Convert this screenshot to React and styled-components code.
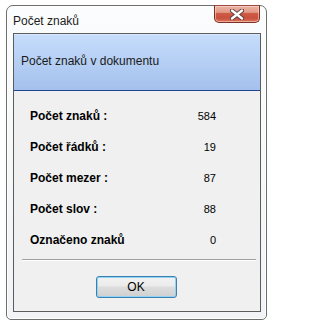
import React from "react";
import styled, { createGlobalStyle } from "styled-components";

const stats = [
  { label: "Počet znaků :", value: 584 },
  { label: "Počet řádků :", value: 19 },
  { label: "Počet mezer :", value: 87 },
  { label: "Počet slov :", value: 88 },
  { label: "Označeno znaků", value: 0 },
];

const CloseIcon = () => (
  <svg width="14" height="11" viewBox="0 0 14 11">
    <path
      d="M2 1.5 L12 9.5 M12 1.5 L2 9.5"
      stroke="#5a3a36"
      strokeWidth="4.2"
      strokeLinecap="round"
      fill="none"
    />
    <path
      d="M2 1.5 L12 9.5 M12 1.5 L2 9.5"
      stroke="#ffffff"
      strokeWidth="2.4"
      strokeLinecap="round"
      fill="none"
    />
  </svg>
);

const App = () => (
  <>
    <GlobalStyle />
    <Window>
      <TitleBar>
        <Title>Počet znaků</Title>
        <CloseButton aria-label="Zavřít">
          <CloseIcon />
        </CloseButton>
      </TitleBar>
      <Panel>
        <Header>Počet znaků v dokumentu</Header>
        <StatsGrid>
          {stats.map((s) => (
            <React.Fragment key={s.label}>
              <Label>{s.label}</Label>
              <Value>{s.value}</Value>
            </React.Fragment>
          ))}
        </StatsGrid>
        <Separator />
        <Footer>
          <OkButton>OK</OkButton>
        </Footer>
      </Panel>
    </Window>
  </>
);

export default App;

// --- Styled Components ---
const GlobalStyle = createGlobalStyle`
  html, body { margin: 0; padding: 0; background: #ffffff; }
  body { font-family: "Liberation Sans", Arial, sans-serif; }
  * { box-sizing: border-box; }
`;
const Window = styled.div`
  margin: 5px 0 0 6px; width: 261px; height: 315px;
  border: 1px solid #6e6e6e; border-radius: 7px 7px 5px 5px;
  background: linear-gradient(#fbfcfd, #f1f3f6);
  display: flex; flex-direction: column;
  box-shadow: inset 0 0 0 1px #ffffff;
`;
const TitleBar = styled.div`
  height: 27px; display: flex; align-items: flex-start; justify-content: space-between;
  padding: 0 6px 0 6px;
`;
const Title = styled.div`
  font-size: 12px; color: #1b1b1b; margin-top: 8px;
`;
const CloseButton = styled.div`
  width: 46px; height: 18px; margin-top: -1px;
  border: 1px solid #7d2f24; border-top-color: #9a4a3e; border-radius: 0 0 5px 5px;
  background: linear-gradient(#eab3a5 0%, #e39a88 40%, #cf5c48 45%, #c9503c 75%, #d9745e 100%);
  box-shadow: inset 0 0 0 1px rgba(255, 220, 210, 0.55);
  display: flex; align-items: center; justify-content: center;
`;
const Panel = styled.div`
  margin: 0 5px 7px 6px; height: 279px;
  border: 1px solid #5c5c5c; background: #f0f0f0;
  display: flex; flex-direction: column;
`;
const Header = styled.div`
  height: 57px; padding: 0 0 2px 7px;
  display: flex; align-items: center;
  font-size: 12px; color: #1a1a1a;
  background: linear-gradient(#c6ddfb, #a4c1ed);
  border-bottom: 1px solid #1f4690;
  box-shadow: inset 0 1px 0 #d9e8fc;
`;
const StatsGrid = styled.div`
  margin-top: 9px; padding: 0 44px 0 16px;
  display: grid; grid-template-columns: 1fr auto; grid-auto-rows: 31px;
  align-items: center;
`;
const Label = styled.div`
  font-size: 12px; font-weight: bold; color: #000;
`;
const Value = styled.div`
  font-size: 11px; color: #000; text-align: right;
`;
const Separator = styled.div`
  margin: 4px 4px 0 8px; height: 2px;
  border-top: 1px solid #a0a0a0; border-bottom: 1px solid #ffffff;
`;
const Footer = styled.div`
  display: flex; justify-content: center; padding: 15px 2px 0 0;
`;
const OkButton = styled.button`
  width: 81px; height: 22px; padding: 0;
  border: 1px solid #3c7fb1; border-radius: 3px;
  background: linear-gradient(#f2f2f2 0%, #ebebeb 45%, #dddddd 50%, #cfcfcf 100%);
  box-shadow: inset 0 0 0 1px #8fd3f4;
  font-family: "Liberation Sans", Arial, sans-serif; font-size: 12px; color: #000;
`;
